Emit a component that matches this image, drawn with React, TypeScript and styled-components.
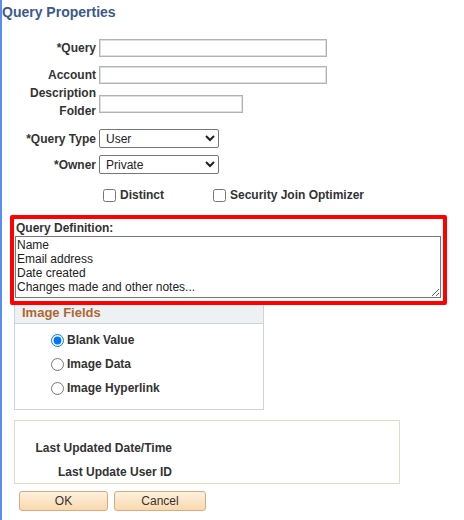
import React from "react";
import styled, { createGlobalStyle } from "styled-components";

const Global = createGlobalStyle`
  html, body { margin: 0; padding: 0; background: #fff; }
  body { font-family: "Liberation Sans", Arial, sans-serif; color: #333; }
  * { box-sizing: border-box; }
`;

const Page = styled.div`
  width: 464px;
  height: 520px;
  border-left: 2px solid #5b8def;
  overflow: hidden;
  display: flex;
  flex-direction: column;
`;

const Title = styled.h1`
  margin: 0;
  padding-top: 3px;
  font-size: 14px;
  line-height: 18px;
  font-weight: bold;
  color: #3b5a8b;
`;

const FieldRow = styled.div<{ $mt: number; $h: number }>`
  display: flex;
  align-items: center;
  gap: 3px;
  margin-top: ${(p) => p.$mt}px;
  height: ${(p) => p.$h}px;
`;

const Label = styled.label`
  width: 94px;
  text-align: right;
  font-size: 12px;
  font-weight: bold;
  line-height: 18px;
  color: #333;
`;

const TextInput = styled.input<{ $w: number; $top?: number }>`
  width: ${(p) => p.$w}px;
  height: 18px;
  margin: 0;
  margin-top: ${(p) => p.$top ?? 0}px;
  align-self: ${(p) => (p.$top ? "flex-start" : "center")};
  border: 1px solid #b3b3b3;
  box-shadow: inset 0 0 0 1px #dedede;
  padding: 0 3px;
  font: 12px "Liberation Sans", Arial, sans-serif;
  background: #fff;
`;

const Select = styled.select`
  width: 120px;
  height: 19px;
  margin: 0;
  padding: 0 2px;
  border: 1px solid #767676;
  border-radius: 2px;
  font: 12px "Liberation Sans", Arial, sans-serif;
  color: #222;
  background: #fff;
`;

const CheckRow = styled.div`
  display: flex;
  align-items: center;
  height: 18px;
  margin-top: 12px;
  padding-left: 101px;
`;

const CheckItem = styled.label<{ $w?: number }>`
  display: flex;
  align-items: center;
  gap: 4px;
  width: ${(p) => (p.$w ? `${p.$w}px` : "auto")};
  font-size: 12px;
  font-weight: bold;
  color: #333;
`;

const Box = styled.input`
  width: 13px;
  height: 13px;
  margin: 0;
`;

const Highlight = styled.div`
  position: relative;
  z-index: 1;
  margin: 11px 0 0 8px;
  width: 437px;
  border: 4px solid #ff0000;
  border-radius: 2px;
  padding: 2px 3px 3px 1px;
  background: #fff;
  display: flex;
  flex-direction: column;
`;

const DefLabel = styled.div`
  font-size: 12px;
  font-weight: bold;
  line-height: 14px;
  padding-left: 1px;
  color: #333;
`;

const DefArea = styled.textarea`
  display: block;
  width: 426px;
  height: 62px;
  margin: 1px 0 0 0;
  padding: 1px;
  border: 1px solid #767676;
  font: 12px/14px "Liberation Sans", Arial, sans-serif;
  color: #222;
  resize: both;
  outline: none;
`;

const Group = styled.div`
  margin: 0 0 0 12px;
  width: 250px;
  border: 1px solid #cfd3d8;
  border-top: none;
`;

const GroupHeader = styled.div`
  height: 19px;
  background: #eef1f4;
  border-bottom: 1px solid #cfd3d8;
  padding: 1px 0 0 7px;
  font-size: 13px;
  line-height: 14px;
  font-weight: bold;
  color: #b0672f;
`;

const RadioList = styled.div`
  padding: 4px 0 9px 36px;
  display: flex;
  flex-direction: column;
`;

const RadioRow = styled.label`
  display: flex;
  align-items: center;
  gap: 3px;
  height: 24px;
  font-size: 12px;
  font-weight: bold;
  color: #333;
`;

const Radio = styled.input`
  width: 13px;
  height: 13px;
  margin: 0;
`;

const InfoBox = styled.div`
  margin: 10px 0 0 12px;
  width: 386px;
  height: 64px;
  border: 1px solid #e4dbc2;
  padding-top: 18px;
  display: flex;
  flex-direction: column;
  gap: 6px;
`;

const InfoLabel = styled.div`
  width: 157px;
  text-align: right;
  font-size: 12px;
  font-weight: bold;
  line-height: 18px;
  color: #333;
`;

const ButtonBar = styled.div`
  display: flex;
  gap: 6px;
  margin: 7px 0 0 17px;
`;

const Button = styled.button<{ $w: number }>`
  width: ${(p) => p.$w}px;
  height: 20px;
  padding: 0;
  border: 1px solid #e2a87b;
  border-radius: 3px;
  background: linear-gradient(#fdf1de, #f9d9ad);
  font: 12px "Liberation Sans", Arial, sans-serif;
  color: #333;
`;

export default function App() {
  return (
    <>
      <Global />
      <Page>
        <Title>Query Properties</Title>

        <FieldRow $mt={18} $h={18}>
          <Label>*Query</Label>
          <TextInput $w={228} />
        </FieldRow>
        <FieldRow $mt={9} $h={18}>
          <Label>Account</Label>
          <TextInput $w={228} />
        </FieldRow>
        <FieldRow $mt={0} $h={36}>
          <Label>
            Description
            <br />
            Folder
          </Label>
          <TextInput $w={144} $top={11} />
        </FieldRow>
        <FieldRow $mt={9} $h={19}>
          <Label>*Query Type</Label>
          <Select defaultValue="User">
            <option>User</option>
            <option>Role</option>
            <option>Archive</option>
          </Select>
        </FieldRow>
        <FieldRow $mt={7} $h={19}>
          <Label>*Owner</Label>
          <Select defaultValue="Private">
            <option>Private</option>
            <option>Public</option>
          </Select>
        </FieldRow>

        <CheckRow>
          <CheckItem $w={110}>
            <Box type="checkbox" />
            Distinct
          </CheckItem>
          <CheckItem>
            <Box type="checkbox" />
            Security Join Optimizer
          </CheckItem>
        </CheckRow>

        <Highlight>
          <DefLabel>Query Definition:</DefLabel>
          <DefArea
            defaultValue={
              "Name\nEmail address\nDate created\nChanges made and other notes..."
            }
          />
        </Highlight>

        <Group>
          <GroupHeader>Image Fields</GroupHeader>
          <RadioList>
            <RadioRow>
              <Radio type="radio" name="img" defaultChecked />
              Blank Value
            </RadioRow>
            <RadioRow>
              <Radio type="radio" name="img" />
              Image Data
            </RadioRow>
            <RadioRow>
              <Radio type="radio" name="img" />
              Image Hyperlink
            </RadioRow>
          </RadioList>
        </Group>

        <InfoBox>
          <InfoLabel>Last Updated Date/Time</InfoLabel>
          <InfoLabel>Last Update User ID</InfoLabel>
        </InfoBox>

        <ButtonBar>
          <Button $w={89}>OK</Button>
          <Button $w={92}>Cancel</Button>
        </ButtonBar>
      </Page>
    </>
  );
}
